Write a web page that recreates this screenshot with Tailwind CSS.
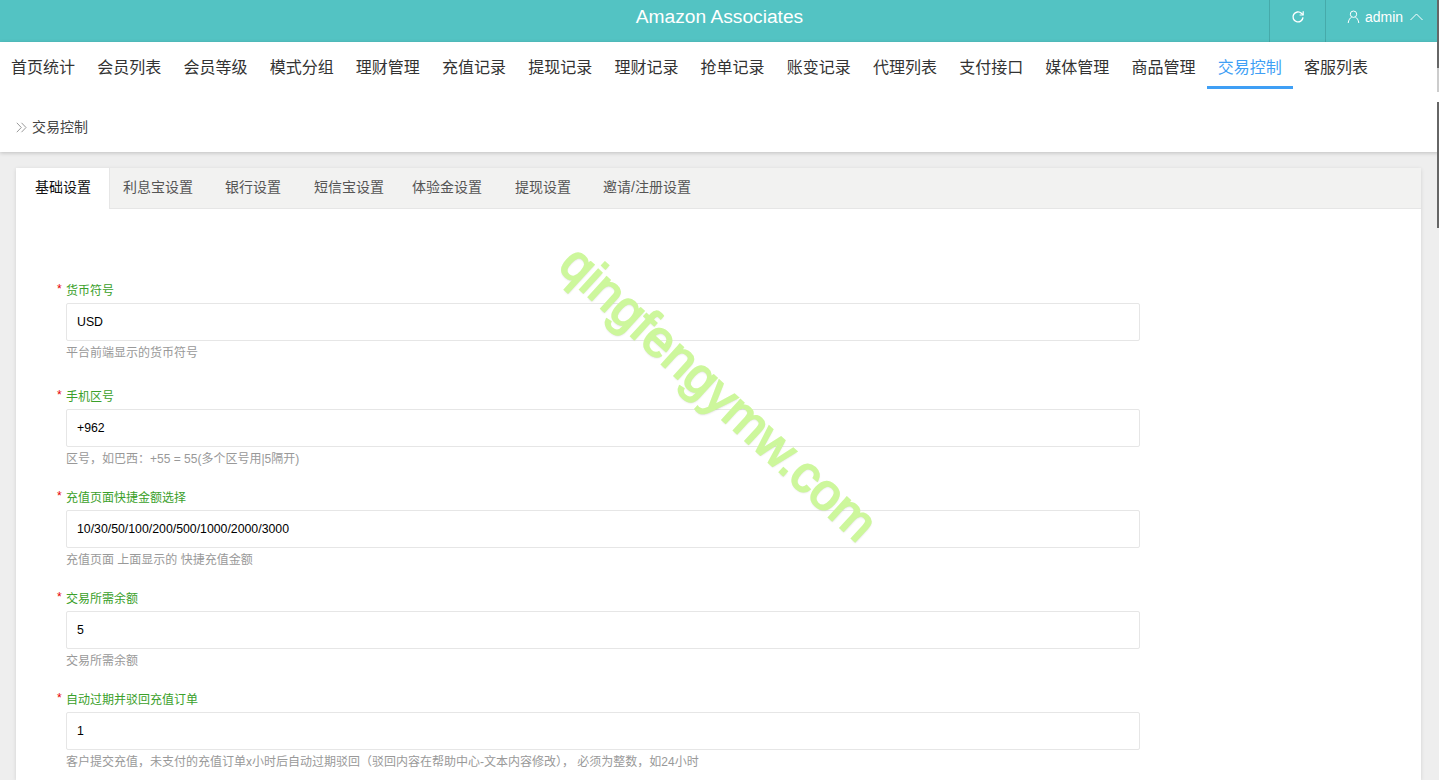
<!DOCTYPE html>
<html>
<head>
    <meta charset="UTF-8">
    <meta name="viewport" content="width=device-width, initial-scale=1.0">
    <title>Amazon Associates</title>
    <script src="https://cdn.jsdelivr.net/npm/@tailwindcss/browser@4"></script>
</head>
<body class="h-[780px] overflow-hidden bg-[#eeeeee] font-['Liberation_Sans','Noto_Sans_CJK_SC',sans-serif] relative">
    <!-- top bar -->
    <header class="h-[42px] bg-[#53c3c3] grid grid-cols-[1fr_auto_1fr] text-white">
        <div></div>
        <div class="text-[19.2px] leading-[34px]">Amazon Associates</div>
        <div class="flex justify-end">
            <div class="w-[56px] border-l border-[#46aaaa] flex justify-center pt-[10px]">
                <svg class="w-[14px] h-[14px]" viewBox="0 0 14 14" fill="none" stroke="white" stroke-width="1.4"><path d="M12 7.4A5 5 0 1 1 10.4 3.2L12 4.8"/><path d="M12.2 1.2v3.8H8.6" stroke-width="1.2"/></svg>
            </div>
            <div class="w-[114px] border-l border-[#46aaaa] flex items-start pl-[21px] pt-[10px] gap-[5px]">
                <svg class="w-[13px] h-[14px]" viewBox="0 0 13 14" fill="none" stroke="white" stroke-width="1"><circle cx="6.5" cy="4.2" r="3.2"/><path d="M1.2 13c.3-3 2-5.4 3.4-5.8M11.8 13c-.3-3-2-5.4-3.4-5.8"/></svg>
                <span class="text-[14px] leading-[15px]">admin</span>
                <svg class="w-[13px] h-[8px] ml-[2px] mt-[3px]" viewBox="0 0 13 8" fill="none" stroke="white" stroke-width="1"><path d="M.5 7 6.5 1l6 6"/></svg>
            </div>
        </div>
    </header>

    <!-- nav + breadcrumb -->
    <div class="h-[110px] bg-white shadow-[0_1px_4px_rgba(0,0,0,0.2)] relative">
        <nav class="flex text-[16px] text-[#333333]">
            <a class="w-[86.2px] h-[47px] leading-[52px] text-center">首页统计</a>
            <a class="w-[86.2px] h-[47px] leading-[52px] text-center">会员列表</a>
            <a class="w-[86.2px] h-[47px] leading-[52px] text-center">会员等级</a>
            <a class="w-[86.2px] h-[47px] leading-[52px] text-center">模式分组</a>
            <a class="w-[86.2px] h-[47px] leading-[52px] text-center">理财管理</a>
            <a class="w-[86.2px] h-[47px] leading-[52px] text-center">充值记录</a>
            <a class="w-[86.2px] h-[47px] leading-[52px] text-center">提现记录</a>
            <a class="w-[86.2px] h-[47px] leading-[52px] text-center">理财记录</a>
            <a class="w-[86.2px] h-[47px] leading-[52px] text-center">抢单记录</a>
            <a class="w-[86.2px] h-[47px] leading-[52px] text-center">账变记录</a>
            <a class="w-[86.2px] h-[47px] leading-[52px] text-center">代理列表</a>
            <a class="w-[86.2px] h-[47px] leading-[52px] text-center">支付接口</a>
            <a class="w-[86.2px] h-[47px] leading-[52px] text-center">媒体管理</a>
            <a class="w-[86.2px] h-[47px] leading-[52px] text-center">商品管理</a>
            <a class="w-[86.2px] h-[47px] leading-[52px] text-center text-[#3f9ff5] border-b-[3px] border-[#3f9ff5]">交易控制</a>
            <a class="w-[86.2px] h-[47px] leading-[52px] text-center">客服列表</a>
        </nav>
        <div class="flex items-center gap-[5px] pl-[16px] mt-[28px] text-[14px] leading-[20px] text-[#444444]">
            <svg class="w-[11px] h-[11px]" viewBox="0 0 11 11" fill="none" stroke="#999999" stroke-width="1"><path d="M.8.8 5.3 5.5.8 10.2M5.5.8 10 5.5 5.5 10.2"/></svg>
            <span>交易控制</span>
        </div>
    </div>

    <!-- settings card -->
    <main class="mt-[16px] ml-[16px] w-[1405px] h-[612px] overflow-hidden bg-white shadow-[0_1px_4px_rgba(0,0,0,0.12)]">
        <div class="h-[41px] flex bg-[#f2f2f1] border-b border-[#e6e6e6] text-[14px] text-[#555555] leading-[39px]">
            <div class="w-[94px] h-[41px] pl-[19px] bg-white text-[#111111] border-r border-[#e6e6e6]">基础设置</div>
            <div class="ml-[13px]">利息宝设置</div>
            <div class="ml-[32px]">银行设置</div>
            <div class="ml-[33px]">短信宝设置</div>
            <div class="ml-[28px]">体验金设置</div>
            <div class="ml-[33px]">提现设置</div>
            <div class="ml-[32px]">邀请/注册设置</div>
        </div>

        <form class="pt-[74px] pl-[40px] w-[1124px] text-[12px]">
            <div class="mb-[27px]">
                <label class="flex h-[17px] leading-[17px] text-[#3aa02a]"><span class="w-[9px] ml-[1px] -mt-[2px] text-[#e60000]">*</span>货币符号</label>
                <input class="block ml-[10px] mt-[3px] w-[1074px] h-[38px] border border-[#e6e6e6] rounded-[2px] px-[10px] text-[12.3px] text-black" value="USD">
                <p class="ml-[10px] mt-[4px] h-[17px] leading-[17px] text-[#999999]">平台前端显示的货币符号</p>
            </div>
            <div class="mb-[22px]">
                <label class="flex h-[17px] leading-[17px] text-[#3aa02a]"><span class="w-[9px] ml-[1px] -mt-[2px] text-[#e60000]">*</span>手机区号</label>
                <input class="block ml-[10px] mt-[3px] w-[1074px] h-[38px] border border-[#e6e6e6] rounded-[2px] px-[10px] text-[12.3px] text-black" value="+962">
                <p class="ml-[10px] mt-[4px] h-[17px] leading-[17px] text-[#999999]">区号，如巴西：+55 = 55(多个区号用|5隔开)</p>
            </div>
            <div class="mb-[22px]">
                <label class="flex h-[17px] leading-[17px] text-[#3aa02a]"><span class="w-[9px] ml-[1px] -mt-[2px] text-[#e60000]">*</span>充值页面快捷金额选择</label>
                <input class="block ml-[10px] mt-[3px] w-[1074px] h-[38px] border border-[#e6e6e6] rounded-[2px] px-[10px] text-[12.3px] text-black" value="10/30/50/100/200/500/1000/2000/3000">
                <p class="ml-[10px] mt-[4px] h-[17px] leading-[17px] text-[#999999]">充值页面 上面显示的 快捷充值金额</p>
            </div>
            <div class="mb-[22px]">
                <label class="flex h-[17px] leading-[17px] text-[#3aa02a]"><span class="w-[9px] ml-[1px] -mt-[2px] text-[#e60000]">*</span>交易所需余额</label>
                <input class="block ml-[10px] mt-[3px] w-[1074px] h-[38px] border border-[#e6e6e6] rounded-[2px] px-[10px] text-[12.3px] text-black" value="5">
                <p class="ml-[10px] mt-[4px] h-[17px] leading-[17px] text-[#999999]">交易所需余额</p>
            </div>
            <div>
                <label class="flex h-[17px] leading-[17px] text-[#3aa02a]"><span class="w-[9px] ml-[1px] -mt-[2px] text-[#e60000]">*</span>自动过期并驳回充值订单</label>
                <input class="block ml-[10px] mt-[3px] w-[1074px] h-[38px] border border-[#e6e6e6] rounded-[2px] px-[10px] text-[12.3px] text-black" value="1">
                <p class="ml-[10px] mt-[4px] h-[17px] leading-[17px] text-[#999999]">客户提交充值，未支付的充值订单x小时后自动过期驳回（驳回内容在帮助中心-文本内容修改）， 必须为整数，如24小时</p>
            </div>
        </form>
    </main>

    <!-- watermark over the page -->
    <div class="absolute left-[719px] top-[393px] -translate-x-1/2 -translate-y-1/2 rotate-[42.5deg] whitespace-nowrap text-[51px] leading-none text-[#cdf79c] [-webkit-text-stroke:2px_#cdf79c] [text-shadow:1px_1px_2px_rgba(0,0,0,0.15)]">qingfengymw.com</div>

    <!-- window scrollbars -->
    <div class="absolute right-0 top-0 w-[2px] h-[68px] bg-[#666666]"></div>
    <div class="absolute right-0 top-[68px] w-[2px] h-[24px] bg-[#cccccc]"></div>
    <div class="absolute right-0 top-[102px] w-[2px] h-[126px] bg-[#666666]"></div>
</body>
</html>
